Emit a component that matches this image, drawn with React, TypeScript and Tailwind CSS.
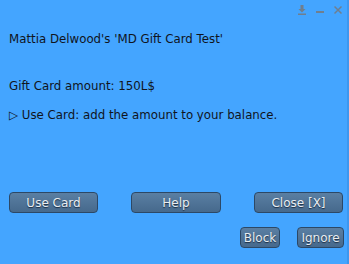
// Gift card dialog floater

const btn =
    'flex items-center justify-center rounded-[4px] border border-[#2c4866] bg-gradient-to-b from-[#5a7fa3] to-[#46698c] text-[12px] text-[#e8edf2] [text-shadow:0_1px_1px_#1c2c40]';

function HeaderIcons() {
    return (
        <div className="flex h-[20px] items-center justify-end gap-[10px] pr-[5px]">
            <svg width="8" height="10" viewBox="0 0 8 10">
                <path d="M2.5 0h3v4h2L4 7.5 0.5 4h2z" fill="#6f7f8f" />
                <rect x="0" y="8.5" width="8" height="1.5" fill="#6f7f8f" />
            </svg>
            <svg width="8" height="10" viewBox="0 0 8 10">
                <rect x="0" y="6" width="8" height="2" fill="#6f7f8f" />
            </svg>
            <svg width="8" height="10" viewBox="0 0 8 10">
                <path d="M0.5 1.5l7 7M7.5 1.5l-7 7" stroke="#6f7f8f" strokeWidth="1.5" />
            </svg>
        </div>
    );
}

export default function App() {
    return (
        <div
            className="flex h-[264px] w-[349px] flex-col border-r-2 border-[#3d97ee] bg-[#44a5ff] text-[#10141c]"
            style={{ fontFamily: '"DejaVu Sans", sans-serif' }}
        >
            <HeaderIcons />
            <div className="pl-[9px] pt-[12px] text-[11.8px] leading-[14px]">
                <p>Mattia Delwood's 'MD Gift Card Test'</p>
                <p className="mt-[33px]">Gift Card amount: 150L$</p>
                <p className="mt-[15px]">▷ Use Card: add the amount to your balance.</p>
            </div>
            <div className="mt-[70px] flex gap-[33px] pl-[9px]">
                <button className={`${btn} h-[21px] w-[89px]`}>Use Card</button>
                <button className={`${btn} h-[21px] w-[90px]`}>Help</button>
                <button className={`${btn} h-[21px] w-[89px]`}>Close [X]</button>
            </div>
            <div className="mt-[14px] flex justify-end gap-[17px] pr-[3px]">
                <button className={`${btn} h-[21px] w-[40px]`}>Block</button>
                <button className={`${btn} h-[21px] w-[47px]`}>Ignore</button>
            </div>
        </div>
    );
}
